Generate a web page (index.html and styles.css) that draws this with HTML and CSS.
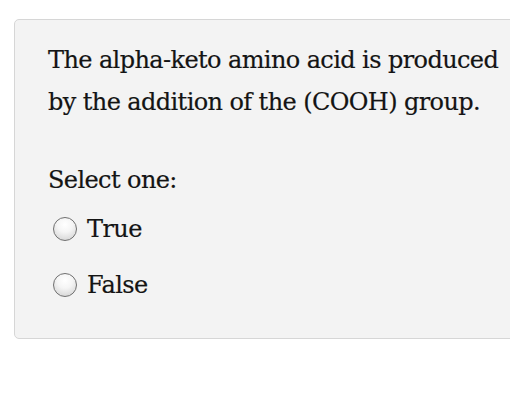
FILE: index.html
```html
<!DOCTYPE html>
<html>
<head>
<meta charset="utf-8">
<link rel="stylesheet" href="styles.css">
</head>
<body>
<div class="page">
  <div class="card">
    <p class="question">The alpha-keto amino acid is produced by the addition of the (COOH) group.</p>
    <p class="prompt">Select one:</p>
    <div class="options">
      <label class="option"><input type="radio" name="a"><span>True</span></label>
      <label class="option"><input type="radio" name="a"><span>False</span></label>
    </div>
  </div>
</div>
</body>
</html>
```
FILE: styles.css
```css
html, body {
  margin: 0;
  padding: 0;
  background: #fff;
  overflow: hidden;
}
.page {
  width: 510px;
  height: 415px;
  padding: 19px 0 0 14px;
  box-sizing: border-box;
  overflow: hidden;
}
.card {
  width: 540px;
  height: 320px;
  box-sizing: border-box;
  background: #f3f3f3;
  border: 1px solid #d6d6d6;
  border-radius: 5px;
  padding: 19px 0 0 33px;
  font-family: "DejaVu Serif", serif;
  color: #141414;
  font-size: 24px;
  letter-spacing: -0.6px;
  -webkit-text-stroke: 0.2px #141414;
}
.question {
  margin: 0;
  line-height: 42px;
  width: 480px;
}
.prompt {
  margin: 41px 0 0 0;
  line-height: 32px;
}
.options {
  display: flex;
  flex-direction: column;
  gap: 24px;
  margin-top: 17px;
}
.option {
  display: flex;
  align-items: center;
  gap: 10px;
  padding-left: 5px;
  line-height: 32px;
}
.option input {
  appearance: none;
  -webkit-appearance: none;
  margin: 0;
  width: 24px;
  height: 24px;
  border-radius: 50%;
  border: 1.5px solid #707070;
  background: radial-gradient(circle at 50% 30%, #ffffff 0%, #f5f5f5 40%, #cdcdcd 100%);
  box-sizing: border-box;
}
```
